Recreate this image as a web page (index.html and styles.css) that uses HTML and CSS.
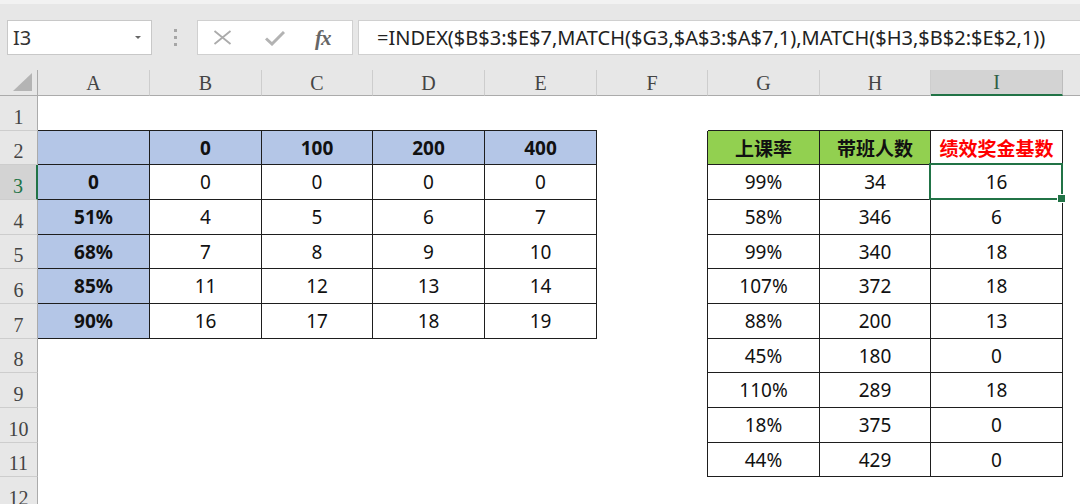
FILE: index.html
```html
<!DOCTYPE html>
<html>
<head>
<meta charset="utf-8">
<link rel="stylesheet" href="styles.css">
</head>
<body>
<div class="app">
  <div class="topstrip"></div>
  <div class="fbar">
    <div class="namebox"><span class="ref">I3</span><span class="caret"></span></div>
    <div class="grip"><i></i><i></i><i></i></div>
    <div class="iconbox">
      <svg class="ic-x" width="19" height="15" viewBox="0 0 19 15"><path d="M1.5 1 L17.5 14 M17.5 1 L1.5 14" stroke="#ababab" stroke-width="1.8" fill="none"/></svg>
      <svg class="ic-ok" width="20" height="15" viewBox="0 0 20 15"><path d="M1 7.5 L7 13 L19 1" stroke="#b3b3b3" stroke-width="3" fill="none"/></svg>
      <span class="fx">fx</span>
    </div>
    <div class="formula">=INDEX($B$3:$E$7,MATCH($G3,$A$3:$A$7,1),MATCH($H3,$B$2:$E$2,1))</div>
  </div>
  <div class="sheet">
    <div class="row hdr">
      <div class="corner"><svg width="20" height="18" viewBox="0 0 20 18"><path d="M19 0 L19 18 L0 18 Z" fill="#b4b4b4"/></svg></div>
      <div class="ch">A</div><div class="ch">B</div><div class="ch">C</div><div class="ch">D</div><div class="ch">E</div><div class="ch">F</div><div class="ch">G</div><div class="ch">H</div><div class="ch sel">I</div><div class="ch fill"></div>
    </div>
    <div class="row">
      <div class="rh">1</div>
      <div class="c tt"></div><div class="c tt"></div><div class="c tt"></div><div class="c tt"></div><div class="c tt"></div><div class="c"></div><div class="c tt"></div><div class="c tt"></div><div class="c tt"></div><div class="c"></div>
    </div>
    <div class="row">
      <div class="rh">2</div>
      <div class="c t blue"></div><div class="c t blue">0</div><div class="c t blue">100</div><div class="c t blue">200</div><div class="c t blue">400</div><div class="c tl"></div><div class="c t green">上课率</div><div class="c t green">带班人数</div><div class="c t red">绩效奖金基数</div><div class="c"></div>
    </div>
    <div class="row">
      <div class="rh rsel">3</div>
      <div class="c t blue">0</div><div class="c t">0</div><div class="c t">0</div><div class="c t">0</div><div class="c t">0</div><div class="c tl"></div><div class="c t">99%</div><div class="c t">34</div><div class="c t active">16</div><div class="c"></div>
    </div>
    <div class="row">
      <div class="rh">4</div>
      <div class="c t blue">51%</div><div class="c t">4</div><div class="c t">5</div><div class="c t">6</div><div class="c t">7</div><div class="c tl"></div><div class="c t">58%</div><div class="c t">346</div><div class="c t">6</div><div class="c"></div>
    </div>
    <div class="row">
      <div class="rh">5</div>
      <div class="c t blue">68%</div><div class="c t">7</div><div class="c t">8</div><div class="c t">9</div><div class="c t">10</div><div class="c tl"></div><div class="c t">99%</div><div class="c t">340</div><div class="c t">18</div><div class="c"></div>
    </div>
    <div class="row">
      <div class="rh">6</div>
      <div class="c t blue">85%</div><div class="c t">11</div><div class="c t">12</div><div class="c t">13</div><div class="c t">14</div><div class="c tl"></div><div class="c t">107%</div><div class="c t">372</div><div class="c t">18</div><div class="c"></div>
    </div>
    <div class="row">
      <div class="rh">7</div>
      <div class="c t blue">90%</div><div class="c t">16</div><div class="c t">17</div><div class="c t">18</div><div class="c t">19</div><div class="c tl"></div><div class="c t">88%</div><div class="c t">200</div><div class="c t">13</div><div class="c"></div>
    </div>
    <div class="row">
      <div class="rh">8</div>
      <div class="c"></div><div class="c"></div><div class="c"></div><div class="c"></div><div class="c"></div><div class="c tl"></div><div class="c t">45%</div><div class="c t">180</div><div class="c t">0</div><div class="c"></div>
    </div>
    <div class="row">
      <div class="rh">9</div>
      <div class="c"></div><div class="c"></div><div class="c"></div><div class="c"></div><div class="c"></div><div class="c tl"></div><div class="c t">110%</div><div class="c t">289</div><div class="c t">18</div><div class="c"></div>
    </div>
    <div class="row">
      <div class="rh">10</div>
      <div class="c"></div><div class="c"></div><div class="c"></div><div class="c"></div><div class="c"></div><div class="c tl"></div><div class="c t">18%</div><div class="c t">375</div><div class="c t">0</div><div class="c"></div>
    </div>
    <div class="row">
      <div class="rh">11</div>
      <div class="c"></div><div class="c"></div><div class="c"></div><div class="c"></div><div class="c"></div><div class="c tl"></div><div class="c t">44%</div><div class="c t">429</div><div class="c t">0</div><div class="c"></div>
    </div>
    <div class="row">
      <div class="rh">12</div>
      <div class="c"></div><div class="c"></div><div class="c"></div><div class="c"></div><div class="c"></div><div class="c"></div><div class="c"></div><div class="c"></div><div class="c"></div><div class="c"></div>
    </div>
  </div>
</div>
</body>
</html>
```

FILE: styles.css
```css
* { box-sizing: border-box; }
html, body { margin: 0; padding: 0; background: #ffffff; }
.app { width: 1080px; height: 504px; overflow: hidden; font-family: "Noto Sans", "Noto Sans CJK SC", sans-serif; }

.topstrip { height: 4px; background: #f2f2f2; }
.fbar { height: 66px; background: #e7e7e7; display: flex; align-items: flex-start; padding-top: 16px; padding-left: 7px; }
.namebox { width: 145px; height: 35px; background: #fff; border: 1px solid #c8c8c8; display: flex; align-items: center; justify-content: space-between; padding: 0 10px 0 5px; }
.ref { font-size: 20px; color: #333; }
.caret { width: 0; height: 0; border-left: 3px solid transparent; border-right: 3px solid transparent; border-top: 3px solid #666; }
.grip { width: 45px; height: 35px; display: flex; flex-direction: column; align-items: center; justify-content: center; gap: 4px; padding-left: 2px; }
.grip i { display: block; width: 3px; height: 3px; background: #a6a6a6; }
.iconbox { width: 156px; height: 35px; background: #fff; border: 1px solid #d0d0d0; display: flex; align-items: center; padding-left: 15px; }
.ic-x { margin-right: 33px; }
.ic-ok { margin-right: 30px; margin-top: 1px; }
.fx { font-family: "Liberation Serif", serif; font-style: italic; font-weight: bold; font-size: 21px; color: #666; letter-spacing: -1px; margin-top: 1px; }
.formula { flex: 1; margin-left: 5px; height: 35px; background: #fff; border: 1px solid #d0d0d0; border-right: none; padding-left: 18px; font-size: 20px; line-height: 33px; color: #222; white-space: nowrap; overflow: hidden; }

.sheet { background: #fff; }
.row { display: flex; height: 35px; }
.row:nth-child(3n) { height: 34px; }
.row.hdr { height: 26px; background: #e7e7e7; }
.row > :nth-child(1) { width: 38px; flex: none; }
.row > :nth-child(2) { width: 112px; flex: none; }
.row > :nth-child(3) { width: 112px; flex: none; }
.row > :nth-child(4) { width: 111px; flex: none; }
.row > :nth-child(5) { width: 112px; flex: none; }
.row > :nth-child(6) { width: 112px; flex: none; }
.row > :nth-child(7) { width: 111px; flex: none; }
.row > :nth-child(8) { width: 112px; flex: none; }
.row > :nth-child(9) { width: 111px; flex: none; }
.row > :nth-child(10) { width: 132px; flex: none; }
.row > :nth-child(11) { flex: 1; }

.corner { display: flex; align-items: flex-end; justify-content: flex-end; padding: 0 4px 4px 0; border-right: 1px solid #ababab; border-bottom: 1px solid #ababab; }
.corner svg { display: block; }
.ch { font-family: "Liberation Serif", serif; font-size: 20px; line-height: 20px; color: #444; display: flex; align-items: flex-end; justify-content: center; padding-bottom: 2px; border-right: 1px solid #cdcdcd; border-bottom: 1px solid #ababab; }
.ch.sel { background: #d3d3d3; color: #2e5e44; border-bottom: 2px solid #217346; border-right-color: #bdbdbd; }
.ch.fill { border-right: none; }

.rh { font-family: "Liberation Serif", serif; font-size: 20px; line-height: 20px; color: #444; background: #e7e7e7; display: flex; align-items: flex-end; justify-content: center; padding-bottom: 3px; border-right: 1px solid #ababab; border-bottom: 1px solid #cdcdcd; }
.rh.rsel { background: #d3d3d3; color: #217346; border-right: 2px solid #217346; }

.c { display: flex; align-items: center; justify-content: center; font-size: 19px; color: #111; white-space: nowrap; }
.t { border-right: 1px solid #1e1e1e; border-bottom: 1px solid #1e1e1e; }
.tt { border-bottom: 1px solid #1e1e1e; }
.tl { border-right: 1px solid #1e1e1e; }
.blue { background: #b4c6e7; font-weight: bold; }
.green { background: #92d050; font-weight: bold; font-family: "Noto Sans CJK SC", sans-serif; }
.red { color: #ff0000; font-weight: bold; font-family: "Noto Sans CJK SC", sans-serif; }
.active { position: relative; }
.active::after { content: ""; position: absolute; left: -2px; top: -2px; right: -1px; bottom: -1px; border: 2px solid #217346; }
.active::before { content: ""; position: absolute; right: -4px; bottom: -4px; width: 7px; height: 7px; background: #217346; border: 1px solid #fff; z-index: 2; }
```
